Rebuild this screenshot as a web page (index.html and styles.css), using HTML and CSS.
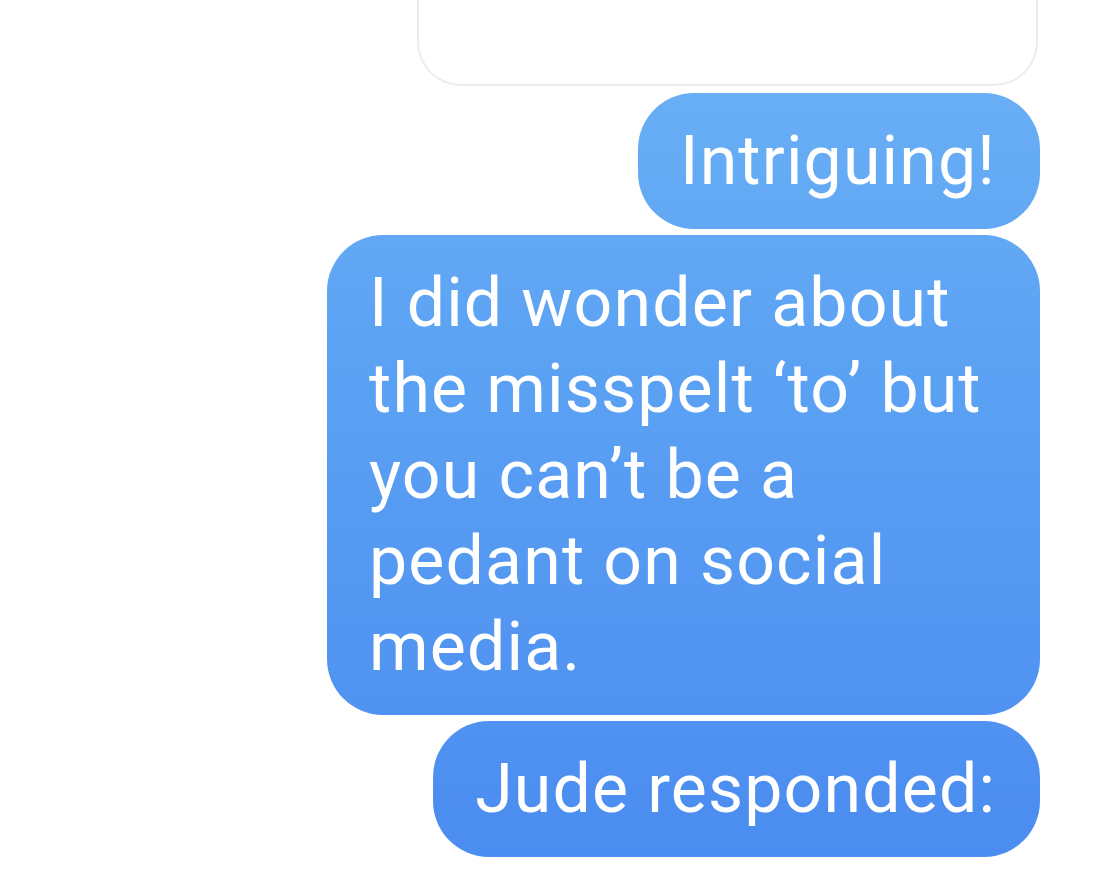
FILE: index.html
```html
<!DOCTYPE html>
<html lang="en">
<head>
  <meta charset="UTF-8" />
  <title>Messages</title>
  <link rel="stylesheet" href="styles.css">
</head>
<body>
  <main class="thread">
    <!-- link preview card, scrolled mostly out of view -->
    <div class="card"></div>

    <div class="bubble">Intriguing!</div>
    <div class="bubble">I did wonder about the misspelt ‘to’ but you can’t be a pedant on social media.</div>
    <div class="bubble">Jude responded:</div>
  </main>
</body>
</html>
```

FILE: styles.css
```css
body {
  margin: 0;
  padding: 0;
  background: #fff;
  font-family: Roboto, "Liberation Sans", sans-serif;
  overflow: hidden;
}
.thread {
  display: flex;
  flex-direction: column;
  align-items: flex-end;
  gap: 6px;
  padding-right: 68px;
}
.card {
  box-sizing: border-box;
  width: 621px;
  height: 86px;
  margin-bottom: 1px;
  margin-right: 2px;
  border: 2px solid #ececf1;
  border-top: none;
  border-radius: 0 0 44px 44px;
  background: #fff;
}
.bubble {
  max-width: 627px;
  padding: 25px 44px 25px 42px;
  border-radius: 56px;
  color: #fff;
  font-size: 68px;
  line-height: 86px;
  letter-spacing: 1.15px;
  background: linear-gradient(to bottom, #6cb3f6 0px, #5aa0f3 400px, #4a8bf0 886px);
  background-attachment: fixed;
}
```
